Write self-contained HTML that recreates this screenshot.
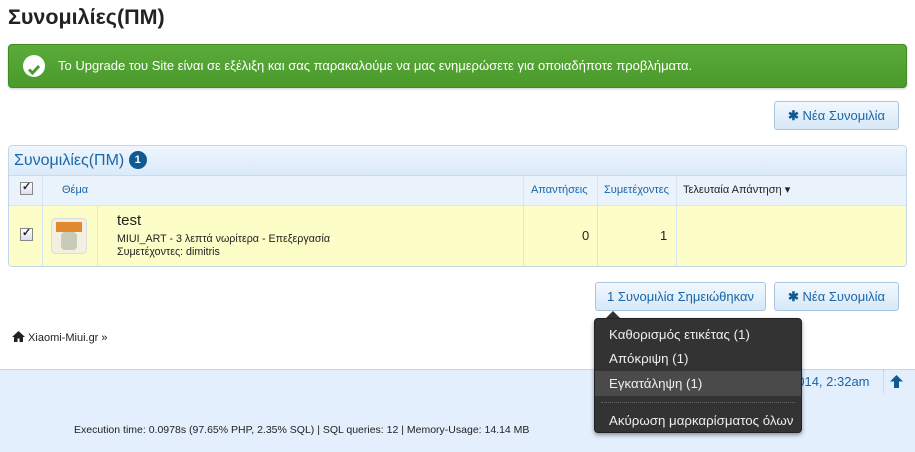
<!DOCTYPE html>
<html><head><meta charset="utf-8"><style>
*{margin:0;padding:0;box-sizing:border-box}
body{width:915px;height:452px;overflow:hidden;background:#fff;font-family:"Liberation Sans",Arial,sans-serif;position:relative;color:#222}
.a{position:absolute}
h1{position:absolute;left:8px;top:5px;font-size:21.5px;font-weight:bold;color:#222}
.green{left:8px;top:44px;width:899px;height:44px;background:linear-gradient(#5aab3a,#4a9a2c);border:1px solid #3f8a26;border-radius:4px;color:#fff;font-size:13px;line-height:42px;padding-left:49px;box-shadow:0 1px 2px rgba(0,0,0,.2)}
.chk{left:14px;top:10px;width:22px;height:22px;border-radius:50%;background:#fff}
.btn{height:29px;border:1px solid #a9c4df;border-radius:3px;background:linear-gradient(#f2f8fe,#d7e8f8);color:#1a66a8;font-size:13px;line-height:27px;text-align:center}
.panel{left:8px;top:145px;width:899px;height:122px;border:1px solid #c4d7ea;border-radius:4px;overflow:hidden;background:#fff}
.ph{left:0;top:0;width:100%;height:30px;background:linear-gradient(#eef5fd,#dbeaf9);border-bottom:1px solid #c9dcef;color:#1a66a8;font-size:16px;line-height:30px;padding-left:5px}
.badge{display:inline-block;width:18px;height:18px;border-radius:50%;background:#0f5a93;color:#fff;font-size:11px;font-weight:bold;text-align:center;line-height:18px;vertical-align:2px}
.th{top:30px;height:30px;background:#eaf2fb;border-bottom:1px solid #d8e5f2;font-size:11px;color:#1a66a8;line-height:29px}
.td{top:60px;height:61px;background:#fdfdc8}
.vl{width:1px;background:#d8e5f2}
.cb{width:13px;height:13px;border:1px solid #888;background:linear-gradient(#fff,#dde);}
.cb:after{content:"✓";position:absolute;left:1px;top:-3px;font-size:11px;color:#223;font-weight:bold}
.dd{left:594px;top:318px;width:208px;height:115px;background:#333;border:1px solid #222;border-radius:4px;color:#eee;font-size:13.3px;box-shadow:0 2px 4px rgba(0,0,0,.4)}
.dd div{position:absolute;left:14px}
</style></head><body>
<h1>Συνομιλίες(ΠΜ)</h1>
<div class="a green"><div class="a chk"><svg width="22" height="22" viewBox="0 0 22 22"><path d="M6 11.5l3.5 3.5 6.5-7" stroke="#4a9a2c" stroke-width="3" fill="none"/></svg></div>Το Upgrade του Site είναι σε εξέλιξη και σας παρακαλούμε να μας ενημερώσετε για οποιαδήποτε προβλήματα.</div>
<div class="a btn" style="left:774px;top:101px;width:125px"><b style="color:#0f5a93">✱</b> Νέα Συνομιλία</div>
<div class="a panel">
<div class="a ph">Συνομιλίες(ΠΜ) <span class="badge">1</span></div>
<div class="a th" style="left:0;width:899px"></div>
<div class="a td" style="left:0;width:899px"></div>
<div class="a vl" style="left:33px;top:30px;height:92px"></div>
<div class="a vl" style="left:88px;top:60px;height:62px"></div>
<div class="a vl" style="left:514px;top:30px;height:92px"></div>
<div class="a vl" style="left:588px;top:30px;height:92px"></div>
<div class="a vl" style="left:667px;top:30px;height:92px"></div>
<div class="a cb" style="left:11px;top:36px"></div>
<div class="a cb" style="left:11px;top:82px"></div>
<div class="a th" style="left:53px;background:none;border:0">Θέμα</div>
<div class="a th" style="left:522px;background:none;border:0">Απαντήσεις</div>
<div class="a th" style="left:595px;background:none;border:0">Συμετέχοντες</div>
<div class="a th" style="left:674px;background:none;border:0;color:#222">Τελευταία Απάντηση ▾</div>
<div class="a" style="left:42px;top:72px;width:36px;height:36px;border:1px solid #ddd;border-radius:4px;background:#f4efe0"><div class="a" style="left:4px;top:3px;width:26px;height:10px;background:#e08a30"></div><div class="a" style="left:9px;top:13px;width:16px;height:18px;background:#c8cbb8;border-radius:4px"></div></div>
<div class="a" style="left:108px;top:66px;font-size:15px">test</div>
<div class="a" style="left:108px;top:87px;font-size:10.7px">MIUI_ART - 3 λεπτά νωρίτερα - Επεξεργασία</div>
<div class="a" style="left:108px;top:100px;font-size:10.7px">Συμετέχοντες: dimitris</div>
<div class="a" style="left:573px;top:82px;font-size:13px">0</div>
<div class="a" style="left:651px;top:82px;font-size:13px">1</div>
</div>
<div class="a btn" style="left:595px;top:282px;width:171px">1 Συνομιλία Σημειώθηκαν</div>
<div class="a btn" style="left:774px;top:282px;width:125px"><b style="color:#0f5a93">✱</b> Νέα Συνομιλία</div>
<div class="a" style="left:12px;top:331px;font-size:11px"><svg width="13" height="11" viewBox="0 0 13 11" style="vertical-align:-1px"><path d="M6.5 0L0 6h2v5h3.5V7.5h2V11H11V6h2z" fill="#222"/></svg> Xiaomi-Miui.gr »</div>
<div class="a" style="left:0;top:369px;width:915px;height:83px;background:#e3effc;border-top:1px solid #c4d7ea"></div>
<div class="a" style="left:790px;top:374px;font-size:13px;color:#1a66a8">2014, 2:32am</div>
<div class="a" style="left:883px;top:370px;height:24px;border-left:1px dotted #b0c8e0"></div>
<svg class="a" style="left:890px;top:375px" width="13" height="13" viewBox="0 0 13 13"><path d="M6.5 0L0 6.5h4V13h5V6.5h4z" fill="#0f5a93"/></svg>
<div class="a" style="left:74px;top:424px;font-size:10.5px">Execution time: 0.0978s (97.65% PHP, 2.35% SQL) | SQL queries: 12 | Memory-Usage: 14.14 MB</div>
<div class="a" style="left:606px;top:311px;width:0;height:0;border:7px solid transparent;border-top:0;border-bottom-color:#333"></div>
<div class="a dd">
<div style="top:8px">Καθορισμός ετικέτας (1)</div>
<div style="top:32px">Απόκριψη (1)</div>
<div style="left:0;top:52px;width:206px;height:25px;background:#4a4a4a"></div>
<div style="top:57px">Εγκατάληψη (1)</div>
<div style="left:6px;top:83px;width:194px;border-top:1px dotted #666"></div>
<div style="top:94px">Ακύρωση μαρκαρίσματος όλων</div>
</div>
</body></html>
